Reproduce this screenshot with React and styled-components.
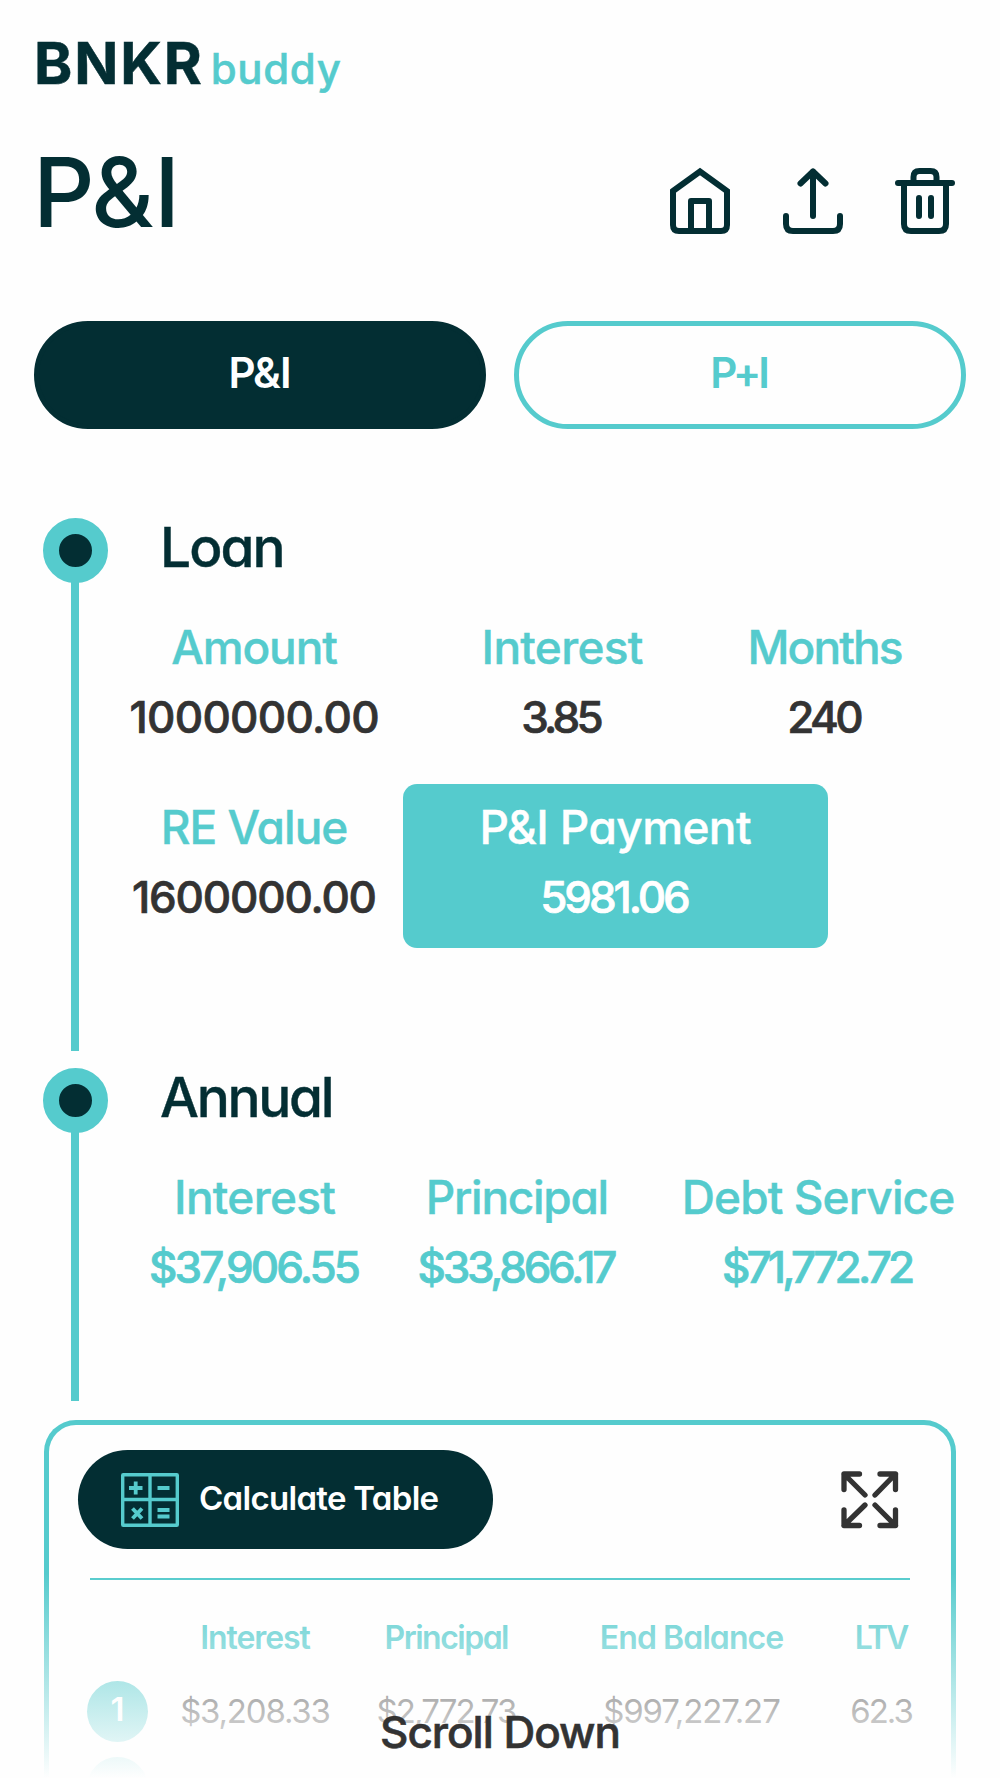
import React from 'react'
import styled, { createGlobalStyle } from "styled-components";

const teal = "#55cbcd";
const dark = "#032e33";
const ink = "#333333";

const loanTop = [
  { label: "Amount", labelTrack: -1.1, value: "1000000.00", track: -0.7 },
  { label: "Interest", labelTrack: -0.7, value: "3.85", track: -3.8 },
  { label: "Months", labelTrack: -1.9, value: "240", track: -3.6 },
]

const annual = [
  { label: "Interest", labelTrack: -0.7, value: "$37,906.55", track: -2.9 },
  { label: "Principal", labelTrack: -1.3, value: "$33,866.17", track: -3.3 },
  { label: "Debt Service", labelTrack: -0.9, value: "$71,772.72", track: -3.8 },
]

const Stat = ({ label, labelTrack, value, track, color }) => (
  <StatCell>
    <StatLabel $track={labelTrack}>{label}</StatLabel>
    <StatValue $track={track} $color={color}>{value}</StatValue>
  </StatCell>
)

const HomeIcon = () => (
  <svg width="60" height="68" viewBox="0 0 60 68" fill="none" stroke={dark} strokeWidth="6">
    <path d="M3 24 L30 4.500 L57 24 V58 Q57 64 51 64 H9 Q3 64 3 58 Z" />
    <path d="M21 64 V34 H39 V64" strokeLinejoin="round" />
  </svg>
)

const ShareIcon = () => (
  <svg width="60" height="68" viewBox="0 0 60 68" fill="none" stroke={dark} strokeWidth="6" strokeLinecap="round" strokeLinejoin="round">
    <path d="M3 49 V57 Q3 64 10 64 H50 Q57 64 57 57 V49" />
    <path d="M30 49 V5" />
    <path d="M17.500 16.500 L30 4.500 L42.500 16.500" />
  </svg>
)

const TrashIcon = () => (
  <svg width="60" height="68" viewBox="0 0 60 68" fill="none" stroke={dark} strokeWidth="6" strokeLinecap="round" strokeLinejoin="round">
    <path d="M3 16 H57" />
    <path d="M18.500 16 V10 Q18.500 4 24.500 4 H35.500 Q41.500 4 41.500 10 V16" />
    <path d="M9 16 V57 Q9 64 16 64 H44 Q51 64 51 57 V16" />
    <path d="M24 31 V49 M36 31 V49" />
  </svg>
)

const CalculatorIcon = () => (
  <svg width="58" height="54" viewBox="0 0 58 54" fill="none" stroke={teal} strokeWidth="3.4">
    <rect x="1.700" y="1.700" width="54.600" height="50.600" rx="0.5" />
    <path d="M29 2 V52 M2 26.500 H56" />
    <path d="M8 15 H21.500 M14.700 8.500 V21.500 M36.500 15 H48.500" strokeWidth="3.800" />
    <path d="M11.500 35.500 L21 45.500 M21 35.500 L11.500 45.500 M36.500 37 H48.500 M36.500 43.500 H48.500" strokeWidth="3.900" />
  </svg>
)

const ExpandIcon = () => (
  <svg width="58" height="58" viewBox="0 0 58 58" fill="none" stroke={ink} strokeWidth="5.3" strokeLinecap="round" strokeLinejoin="round">
    <path d="M3 18.500 V3 H18.500 M3 3 L24 24" />
    <path d="M39 3 H54.500 V18.500 M54.500 3 L34 24" />
    <path d="M3 39 V54.500 H18.500 M3 54.500 L24 34" />
    <path d="M39 54.500 H54.500 V39 M54.500 54.500 L34 34" />
  </svg>
)

const App = () => {
  return (
    <Page>
      <GlobalStyle />
      <Logo>
        <LogoMain $track={1.8}>BNKR</LogoMain>
        <LogoSub $track={0.6}>buddy</LogoSub>
      </Logo>
      <Header>
        <Title>P&amp;I</Title>
        <Actions>
          <HomeIcon />
          <ShareIcon />
          <TrashIcon />
        </Actions>
      </Header>
      <Tabs>
        <Tab $active><Text $track={-1}>P&amp;I</Text></Tab>
        <Tab><Text $track={-3}>P+I</Text></Tab>
      </Tabs>

      <Section $height={533}>
        <Rail><Dot /><Line /></Rail>
        <Body>
          <Heading $track={-1.9}>Loan</Heading>
          <Stats $columns="253px 363px 163px">
            {loanTop.map((s) => <Stat key={s.label} {...s} color={ink} />)}
          </Stats>
          <PaymentRow>
            <Stat label="RE Value" labelTrack={-1} value="1600000.00" track={-1.2} color={ink} />
            <Payment>
              <StatLabel $color="#fff" $track={-0.6}>P&amp;I Payment</StatLabel>
              <StatValue $color="#fff" $track={-3.1}>5981.06</StatValue>
            </Payment>
          </PaymentRow>
        </Body>
      </Section>

      <Section $height={333}>
        <Rail><Dot /><Line /></Rail>
        <Body>
          <Heading $track={-2.3}>Annual</Heading>
          <Stats $columns="254px 271px 331px">
            {annual.map((s) => <Stat key={s.label} {...s} />)}
          </Stats>
        </Body>
      </Section>

      <Card>
        <CardTop>
          <CalcButton>
            <CalculatorIcon />
            <CalcText $track={-0.7}>Calculate Table</CalcText>
          </CalcButton>
          <ExpandIcon />
        </CardTop>
        <Rule />
        <TableRow $height={90}>
          <span />
          <HeadCell $track={-1.1}>Interest</HeadCell>
          <HeadCell $track={-1.5}>Principal</HeadCell>
          <HeadCell $track={-0.9}>End Balance</HeadCell>
          <HeadCell $track={-2.5}>LTV</HeadCell>
        </TableRow>
        <TableRow $height={82}>
          <Badge>1</Badge>
          <Cell $track={-1.2}>$3,208.33</Cell>
          <Cell $track={-1.9}>$2,772.73</Cell>
          <Cell $track={-1.1}>$997,227.27</Cell>
          <Cell $track={-2}>62.3</Cell>
        </TableRow>
        <TableRow $height={71}>
          <Badge />
        </TableRow>
      </Card>
      <Fade />
      <ScrollHint>Scroll Down</ScrollHint>
    </Page>
  )
}
export default App


const GlobalStyle = createGlobalStyle`
  * { box-sizing: border-box; }
  body {
    margin: 0;
    background: #fefefe;
    font-family: Inter, "Liberation Sans", sans-serif;
    /* cv11 is the single-storey a */
    font-feature-settings: "cv11";
    overflow: hidden;
  }
  svg { display: block; flex: none; }
`;

const Page = styled.div`
  position: relative;
  width: 1000px;
  height: 1778px;
  overflow: hidden;
  display: flex;
  flex-direction: column;

  > * { flex: none; }
`;

// keeps the text centred, whatever its letter spacing
const Text = styled.span`
  display: block;
  white-space: nowrap;
  letter-spacing: ${(p) => p.$track || 0}px;
  margin-right: ${(p) => -(p.$track || 0)}px;
`;

const Logo = styled.div`
  height: 84px;
  padding: 34px 0 0 34px;
  display: flex;
  align-items: baseline;
`;

const LogoMain = styled(Text)`
  font-size: 58px;
  line-height: 58px;
  font-weight: 700;
  -webkit-text-stroke: 0.5px;
  color: ${dark};
`;

const LogoSub = styled(Text)`
  margin-left: 9px;
  font-size: 42px;
  font-weight: 500;
  -webkit-text-stroke: 0.5px;
  color: ${teal};
`;

const Header = styled.div`
  height: 237px;
  display: flex;
  justify-content: space-between;
  align-items: flex-start;
  padding: 58px 45px 0 33px;
`;

const Title = styled.h1`
  margin: 0;
  font-size: 96px;
  line-height: 100px;
  font-weight: 500;
  color: ${dark};
`;

const Actions = styled.div`
  display: flex;
  gap: 52.500px;
  margin-top: 25px;
`;

const Tabs = styled.div`
  display: grid;
  grid-template-columns: 452px 452px;
  gap: 28px;
  padding-left: 34px;
`;

const Tab = styled.button`
  display: flex;
  align-items: center;
  justify-content: center;
  height: 108px;
  padding: 0 0 6px;
  border: 5px solid ${(p) => (p.$active ? dark : teal)};
  border-radius: 54px;
  background: ${(p) => (p.$active ? dark : "transparent")};
  color: ${(p) => (p.$active ? "#fff" : teal)};
  font: inherit;
  font-feature-settings: inherit;
  font-size: 42px;
  font-weight: 600;
`;

const Section = styled.section`
  display: flex;
  height: ${(p) => p.$height}px;
  margin: 0 0 17px 43px;

  ${Tabs} + & {
    margin-top: 89px;
  }
`;

const Rail = styled.div`
  width: 65px;
  display: flex;
  flex-direction: column;
  align-items: center;
`;

const Dot = styled.div`
  width: 65px;
  height: 65px;
  border: 16.500px solid ${teal};
  border-radius: 50%;
  background: ${dark};
`;

const Line = styled.div`
  flex: 1;
  width: 8px;
  margin: -2px 1px 0 0;
  background: ${teal};
`;

const Body = styled.div`
  padding-left: 20px;
`;

const Heading = styled(Text)`
  padding-left: 32px;
  font-size: 55px;
  line-height: 58px;
  font-weight: 500;
  -webkit-text-stroke: 0.4px;
  color: ${dark};
`;

const Stats = styled.div`
  display: grid;
  grid-template-columns: ${(p) => p.$columns};
  margin-top: 37px;
`;

const StatCell = styled.div`
  display: flex;
  flex-direction: column;
  align-items: center;
`;

const StatLabel = styled(Text)`
  font-size: 46px;
  line-height: 69px;
  font-weight: 500;
  -webkit-text-stroke: 0.4px;
  color: ${(p) => p.$color || teal};
`;

const StatValue = styled(Text)`
  font-size: 44px;
  line-height: 70px;
  font-weight: 500;
  -webkit-text-stroke: 0.7px;
  color: ${(p) => p.$color || teal};
`;

const PaymentRow = styled.div`
  display: grid;
  grid-template-columns: 253px 425px;
  gap: 22px;
  margin-top: 32px;

  > ${StatCell} {
    padding-top: 9px;
  }
`;

const Payment = styled(StatCell)`
  height: 164px;
  border-radius: 14px;
  background: ${teal};
`;

const Card = styled.section`
  width: 912px;
  height: 400px;
  margin: 2px 0 0 44px;
  border: 5px solid ${teal};
  border-bottom: 0;
  border-radius: 32px 32px 0 0;
`;

const CardTop = styled.div`
  display: flex;
  justify-content: space-between;
  align-items: center;
  padding: 25px 52px 0 29px;
`;

const CalcButton = styled.div`
  width: 415px;
  height: 99px;
  padding-left: 43px;
  display: flex;
  align-items: center;
  gap: 20px;
  border-radius: 50px;
  background: ${dark};
`;

const CalcText = styled(Text)`
  padding-bottom: 4px;
  font-size: 33px;
  font-weight: 600;
  color: #fff;
`;

const Rule = styled.div`
  height: 2px;
  margin: 29px 41px 0;
  background: ${teal};
`;

const TableRow = styled.div`
  display: grid;
  grid-template-columns: 61px 215px 168px 322px 58px;
  align-items: center;
  justify-items: center;
  height: ${(p) => p.$height}px;
  padding-left: 38px;

  ${Rule} + & {
    padding-top: 25px;
  }
`;

const HeadCell = styled(Text)`
  font-size: 32px;
  line-height: 50px;
  font-weight: 600;
  color: ${teal};
`;

const Cell = styled(Text)`
  font-size: 33px;
  font-weight: 400;
  color: ${ink};
`;

const Badge = styled.div`
  width: 61px;
  height: 61px;
  border-radius: 50%;
  background: ${teal};
  color: #fff;
  font-size: 33px;
  font-weight: 600;
  line-height: 57px;
  text-align: center;
`;

// white veil over the cut-off table
const Fade = styled.div`
  position: absolute;
  left: 0;
  right: 0;
  bottom: 0;
  height: 205px;
  background: linear-gradient(rgba(254, 254, 254, 0), #fefefe);
`;

const ScrollHint = styled.div`
  position: absolute;
  left: 0;
  right: 0;
  bottom: 16px;
  font-size: 44px;
  line-height: 60px;
  font-weight: 500;
  -webkit-text-stroke: 0.6px;
  letter-spacing: -1px;
  text-align: center;
  color: ${ink};
`;
